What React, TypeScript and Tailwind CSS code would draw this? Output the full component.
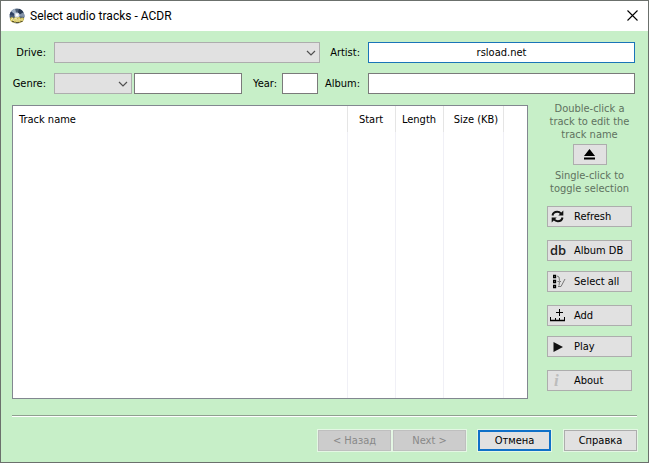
import type { ReactNode } from "react";

const FIELD =
  "h-[21px] w-full min-w-0 border border-[#7a7a7a] bg-white px-1 text-center text-black outline-none";

function Combo({ id, className }: { id: string; className: string }) {
  return (
    <div className={`relative ${className}`}>
      <select
        id={id}
        disabled
        className="block h-[21px] w-full appearance-none border border-[#adadad] bg-[#e1e1e1] px-1 opacity-100"
      />
      <svg
        className="pointer-events-none absolute top-[7px] right-1 h-2 w-[10px]"
        viewBox="0 0 10 8"
        fill="none"
        stroke="#505050"
        strokeWidth="1.2"
      >
        <path d="M1 2l4 4 4-4" />
      </svg>
    </div>
  );
}

function ToolButton({ label, children }: { label: string; children: ReactNode }) {
  return (
    <button
      type="button"
      className="flex h-[21px] w-full items-center border border-[#adadad] bg-[#e1e1e1] text-black"
    >
      <span className="flex w-[26px] shrink-0 items-center pl-[2px]">{children}</span>
      <span className="whitespace-nowrap">{label}</span>
    </button>
  );
}

function DiscIcon() {
  return (
    <svg className="h-4 w-4" viewBox="0 0 16 16">
      <circle cx="8" cy="8" r="7.5" fill="#4d5f78" />
      <path d="M8 8L2 3.5A7.5 7.5 0 0 1 6 .8z" fill="#9fb0c4" />
      <path d="M8 8L10 .8a7.5 7.5 0 0 1 4.500 3.500z" fill="#26364f" />
      <path d="M8 8L.6 7A7.500 7.500 0 0 1 2 3.500z" fill="#2f4263" />
      <path d="M8 8l6.500-3.500A7.500 7.500 0 0 1 15.500 9z" fill="#8494aa" />
      <path d="M.8 10.500c1.500-2 3-2 4 0l1-1.500h5l1 1.500c1-1.500 2-1.500 3.400 0l-1 2.500-2 1.500H3.500l-2-1.500z" fill="#c9b84e" />
      <path d="M2 12.500l1.500-2.500 1 3M6 13v-3l2 1v3M10 13.500v-3l2 2M13 12.500v-2" stroke="#f4eeb4" strokeWidth="1" fill="none" />
      <path d="M3 13.500h2M7 14.500h3M11.500 13.500h2" stroke="#5b5330" strokeWidth="1" />
      <circle cx="8" cy="7" r="2.600" fill="#d6dde8" />
      <circle cx="8" cy="7" r="1.300" fill="#fff" />
    </svg>
  );
}

function RefreshIcon() {
  return (
    <svg className="h-[15px] w-[15px]" viewBox="0 0 15 15" fill="none" stroke="#111" strokeWidth="2">
      <path d="M2.500 6.500C3 3.800 5 2.800 7.200 2.800c1.600 0 2.800.6 3.800 1.800" />
      <path d="M12.500 8.500c-.5 2.700-2.500 3.700-4.700 3.700-1.600 0-2.800-.6-3.800-1.800" />
      <path d="M13.300 1.500v5H8.300z" fill="#111" stroke="none" />
      <path d="M1.700 13.500v-5h5z" fill="#111" stroke="none" />
    </svg>
  );
}

function SelectAllIcon() {
  return (
    <svg className="ml-[3px] h-[15px] w-[14px]" viewBox="0 0 14 15" fill="none">
      <path d="M.5 1.500h2v2h-2zM.5 6.500h2v2h-2zM.5 11.500h2v2h-2z" stroke="#000" strokeWidth="1.300" />
      <path d="M4 2l2 1 .5 3.500L8 8M4.500 7.500h2l-.5 4M5 12.500h3L12 5" stroke="#777" strokeWidth="1" />
    </svg>
  );
}

function AddIcon() {
  return (
    <svg className="h-[15px] w-[17px]" viewBox="0 0 17 15" fill="none" stroke="#000">
      <path d="M9.500 1v7M6 4.500h7" strokeWidth="1" />
      <path d="M.5 9v4M14.500 9v4M5.500 10v2M9.500 10v2" strokeWidth="1" />
      <path d="M0 12.500h15" strokeWidth="1.500" />
    </svg>
  );
}

export default function App() {
  return (
    <div className="flex min-h-screen flex-col border border-[#6b706c] bg-[#c7efc8] font-['DejaVu_Sans_Condensed','Noto_Sans',sans-serif] text-[11px] leading-[13px] text-black">
      <header className="flex h-[30px] items-center bg-white pr-[10px] pl-2">
        <DiscIcon />
        <h1 className="ml-[5px] flex-1 font-[Roboto,'Open_Sans',sans-serif] text-[12px] leading-4">
          Select audio tracks - ACDR
        </h1>
        <button type="button" aria-label="Close" className="pb-[2px]">
          <svg className="h-[11px] w-[11px]" viewBox="0 0 11 11" stroke="#000" strokeWidth="1.100">
            <path d="M.5.5l10 10M10.500.5l-10 10" />
          </svg>
        </button>
      </header>

      <main className="flex flex-1 flex-col pt-[11px]">
        <div className="grid grid-cols-[34px_266fr_32px_267fr] items-center gap-x-2 gap-y-[10px] pr-[13px] pl-[11px]">
          <label htmlFor="drive" className="justify-self-end">Drive:</label>
          <Combo id="drive" className="w-full" />
          <label htmlFor="artist" className="justify-self-end">Artist:</label>
          <input
            id="artist"
            defaultValue="rsload.net"
            className="h-[21px] w-full min-w-0 border border-[#1a74b8] bg-white px-1 text-center text-black outline-none"
          />

          <label htmlFor="genre" className="justify-self-end">Genre:</label>
          <div className="flex items-center pr-[2px]">
            <Combo id="genre" className="mr-[2px] w-[78px] shrink-0" />
            <input aria-label="Genre name" className={FIELD} />
            <label htmlFor="year" className="mr-[5px] ml-[11px]">Year:</label>
            <div className="w-9 shrink-0">
              <input id="year" className={FIELD} />
            </div>
          </div>
          <label htmlFor="album" className="justify-self-end">Album:</label>
          <input id="album" className={FIELD} />
        </div>

        <div className="flex flex-1 pt-2 pr-4 pl-[11px]">
          <div className="mt-[3px] grid flex-1 border border-[#828790] bg-white">
            <table className="h-full w-full table-fixed border-collapse">
              <colgroup>
                <col />
                <col className="w-12" />
                <col className="w-12" />
                <col className="w-[60px]" />
                <col className="w-6" />
              </colgroup>
              <thead>
                <tr className="h-[26px]">
                  <th className="border-r border-[#e5e5e5] pl-[6px] text-left font-normal">Track name</th>
                  <th className="border-r border-[#e5e5e5] font-normal">Start</th>
                  <th className="border-r border-[#e5e5e5] font-normal">Length</th>
                  <th className="border-r border-[#e5e5e5] pl-[6px] font-normal whitespace-nowrap">Size (KB)</th>
                  <th />
                </tr>
              </thead>
              <tbody>
                <tr>
                  <td className="border-r border-[#f0f0f6]" />
                  <td className="border-r border-[#f0f0f6]" />
                  <td className="border-r border-[#f0f0f6]" />
                  <td className="border-r border-[#f0f0f6]" />
                  <td />
                </tr>
              </tbody>
            </table>
          </div>

          <aside className="ml-[19px] flex w-[85px] shrink-0 flex-col items-center">
            <p className="text-center text-[#5f7260]">Double-click a track to edit the track name</p>
            <button
              type="button"
              aria-label="Eject"
              className="mt-[3px] flex h-[21px] w-[34px] items-center justify-center border border-[#adadad] bg-[#e1e1e1]"
            >
              <svg className="h-[11px] w-[11px]" viewBox="0 0 11 11" fill="#000">
                <path d="M5.500 0L11 7H0zM0 8.500h11v2H0z" />
              </svg>
            </button>
            <p className="mt-1 mb-[11px] text-center text-[#5f7260]">Single-click to toggle selection</p>
            <div className="flex w-full flex-col gap-[13px]">
              <ToolButton label="Refresh"><RefreshIcon /></ToolButton>
              <div className="flex flex-col gap-[10px]">
                <ToolButton label="Album DB">
                  <span className="font-['Open_Sans',sans-serif] text-[13px] font-semibold text-[#222]">db</span>
                </ToolButton>
                <ToolButton label="Select all"><SelectAllIcon /></ToolButton>
              </div>
              <div className="flex flex-col gap-[10px]">
                <ToolButton label="Add"><AddIcon /></ToolButton>
                <ToolButton label="Play">
                  <svg className="ml-[3px] h-[10px] w-[10px]" viewBox="0 0 10 10" fill="#111">
                    <path d="M.5 0L10 5 .5 10z" />
                  </svg>
                </ToolButton>
              </div>
              <ToolButton label="About">
                <span className="pl-1 font-['Liberation_Serif',serif] text-[17px] leading-4 font-bold text-[#bcbcbc] italic">i</span>
              </ToolButton>
            </div>
          </aside>
        </div>

        <footer className="pt-4 pr-[11px] pb-[11px] pl-[11px]">
          <div className="h-[2px] border-t border-[#8fa090] bg-white" />
          <div className="mt-[13px] flex justify-end">
            <button type="button" disabled className="mr-[2px] h-[21px] w-[73px] border border-[#bfbfbf] bg-[#cccccc] text-[#888888] outline outline-[#e4f7e4]">
              &lt; Назад
            </button>
            <button type="button" disabled className="h-[21px] w-[73px] border border-[#bfbfbf] bg-[#cccccc] text-[#888888] outline outline-[#e4f7e4]">
              Next &gt;
            </button>
            <button type="button" className="ml-3 h-[21px] w-[73px] border-2 border-[#0f70c8] bg-[#e1e1e1] outline outline-[#e4f7e4]">
              Отмена
            </button>
            <button type="button" className="ml-[13px] h-[21px] w-[73px] border border-[#adadad] bg-[#e1e1e1] outline outline-[#e4f7e4]">
              Справка
            </button>
          </div>
        </footer>
      </main>
    </div>
  );
}
